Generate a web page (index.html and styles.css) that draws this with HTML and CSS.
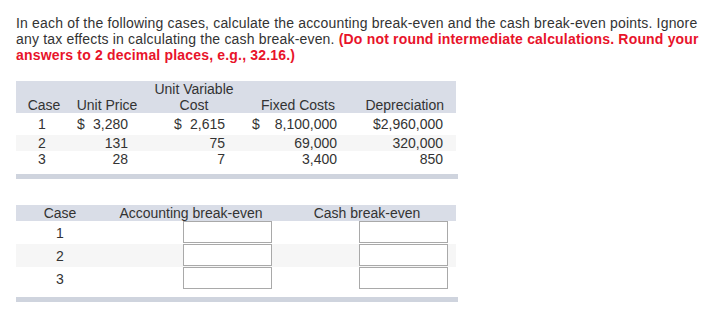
FILE: index.html
```html
<!DOCTYPE html>
<html lang="en">
<head>
<meta charset="utf-8">
<title>Break-even</title>
<link rel="stylesheet" href="styles.css">
</head>
<body>
<div class="page">
  <p class="intro">In each of the following cases, calculate the accounting break-even and the cash break-even points. Ignore any tax effects in calculating the cash break-even. <strong class="warn">(Do not round intermediate calculations. Round your answers to 2 decimal places, e.g., 32.16.)</strong></p>

  <div class="data">
    <div class="data-head">
      <div class="h-case">Case</div>
      <div class="h-price">Unit Price</div>
      <div class="h-var">Unit Variable<br>Cost</div>
      <div class="h-fixed">Fixed Costs</div>
      <div class="h-dep">Depreciation</div>
    </div>
    <div class="data-row first">
      <div class="c-case">1</div>
      <div class="c-price money"><span>$</span><span>3,280</span></div>
      <div class="c-var money"><span>$</span><span>2,615</span></div>
      <div class="c-fixed money"><span>$</span><span>8,100,000</span></div>
      <div class="c-dep">$2,960,000</div>
    </div>
    <div class="data-row shade">
      <div class="c-case">2</div>
      <div class="c-price money"><span></span><span>131</span></div>
      <div class="c-var money"><span></span><span>75</span></div>
      <div class="c-fixed money"><span></span><span>69,000</span></div>
      <div class="c-dep">320,000</div>
    </div>
    <div class="data-row">
      <div class="c-case">3</div>
      <div class="c-price money"><span></span><span>28</span></div>
      <div class="c-var money"><span></span><span>7</span></div>
      <div class="c-fixed money"><span></span><span>3,400</span></div>
      <div class="c-dep">850</div>
    </div>
    <div class="foot"></div>
  </div>

  <div class="answers">
    <div class="ans-head">
      <div>Case</div>
      <div>Accounting break-even</div>
      <div>Cash break-even</div>
    </div>
    <div class="ans-row">
      <div class="a-case">1</div>
      <div class="a-acc"><input type="text" class="box" aria-label="Accounting break-even case 1"></div>
      <div class="a-cash"><input type="text" class="box" aria-label="Cash break-even case 1"></div>
    </div>
    <div class="ans-row shade">
      <div class="a-case">2</div>
      <div class="a-acc"><input type="text" class="box" aria-label="Accounting break-even case 2"></div>
      <div class="a-cash"><input type="text" class="box" aria-label="Cash break-even case 2"></div>
    </div>
    <div class="ans-row">
      <div class="a-case">3</div>
      <div class="a-acc"><input type="text" class="box" aria-label="Accounting break-even case 3"></div>
      <div class="a-cash"><input type="text" class="box" aria-label="Cash break-even case 3"></div>
    </div>
    <div class="foot"></div>
  </div>
</div>
</body>
</html>
```

FILE: styles.css
```css
* { box-sizing: border-box; }

html, body {
  margin: 0;
  padding: 0;
  background: #ffffff;
}

body {
  font-family: "Liberation Sans", Arial, sans-serif;
  font-size: 14px;
  line-height: 16px;
  color: #333333;
}

.page {
  padding: 15px 0 0 16px;
}

.intro {
  margin: 0;
  width: 692px;
  letter-spacing: 0.18px;
}

.warn {
  color: #e8132a;
  font-weight: bold;
}

/* ---------- data table ---------- */
.data {
  margin-top: 18px;
  width: 442px;
}

.data-head,
.data-row {
  display: grid;
  grid-template-columns: 56px 70px 104px 104px 106px;
  width: 440px;
}

.data-head {
  background: #d9dde7;
  align-items: end;
  height: 32px;
}

.h-case { text-align: center; }
.h-price { text-align: center; }
.h-var { text-align: center; }
.h-fixed { text-align: center; }
.h-dep { text-align: right; padding-right: 12px; }

.data-row { height: 16px; }
.data-row.first { height: 22px; padding-top: 3px; }

.shade { background: #f6f6f6; }

.c-case { text-align: center; padding-right: 4px; }

.money {
  display: flex;
  justify-content: space-between;
}

.c-price { padding: 0 14px 0 5px; }
.c-var { padding: 0 21px 0 32px; }
.c-fixed { padding: 0 13px 0 6px; }
.c-dep { text-align: right; padding-right: 13px; }

.foot {
  margin-top: 7px;
  height: 5px;
  width: 442px;
  background: #cfd4de;
}

/* ---------- answers table ---------- */
.answers {
  margin-top: 26px;
  width: 442px;
}

.ans-head,
.ans-row {
  display: grid;
  grid-template-columns: 88px 174px 178px;
  width: 440px;
}

.ans-head {
  background: #d9dde7;
  height: 16px;
  text-align: center;
}

.ans-row {
  height: 23px;
  align-items: center;
}

.a-case { text-align: center; }

.a-acc,
.a-cash {
  display: flex;
  justify-content: flex-end;
  align-self: start;
}

.a-acc { padding-right: 6px; }
.a-cash { padding-right: 8px; }

.box {
  display: block;
  width: 89px;
  height: 22px;
  margin: 0;
  padding: 0 3px;
  border: 1px solid #a9a9a9;
  border-radius: 0;
  background: #ffffff;
  font: inherit;
}
```
